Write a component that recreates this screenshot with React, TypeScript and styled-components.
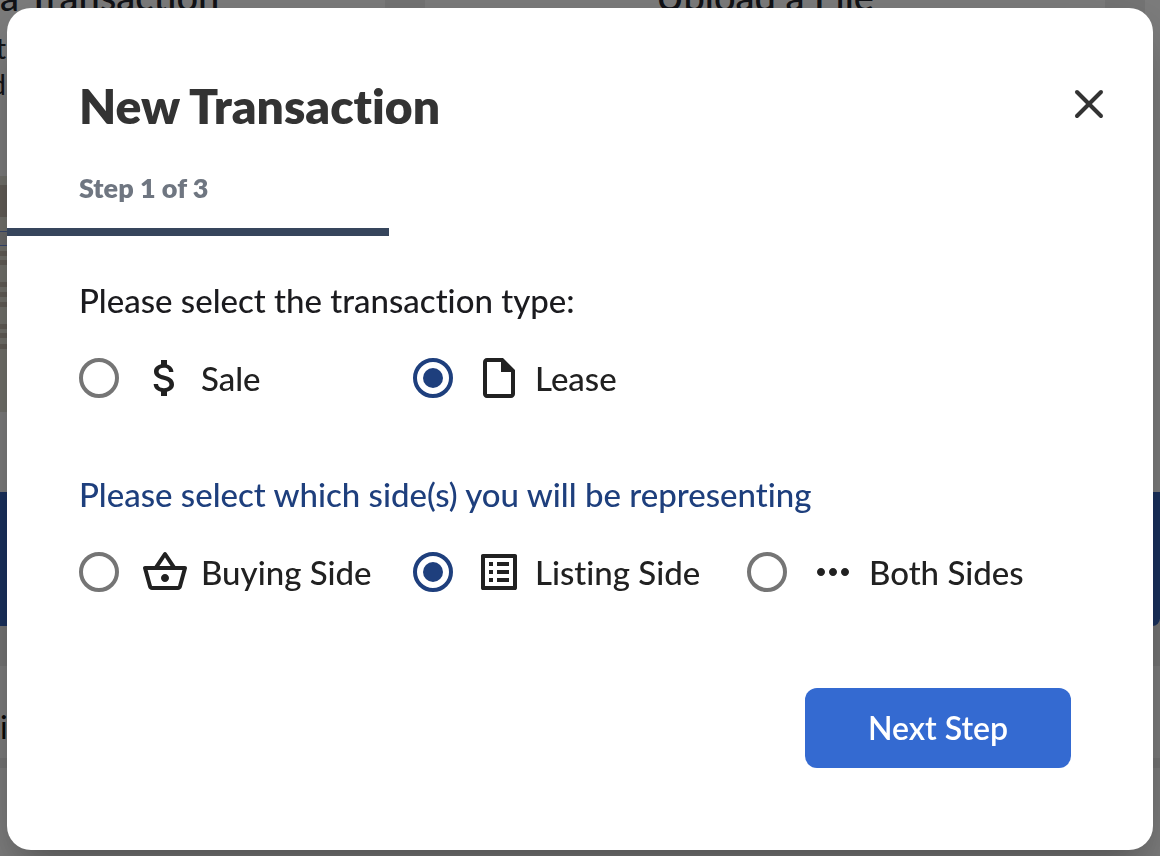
import React, { useState } from "react";
import styled, { createGlobalStyle } from "styled-components";
import type { IconType } from "react-icons";
import {
  MdAttachMoney,
  MdMoreHoriz,
  MdOutlineInsertDriveFile,
  MdOutlineListAlt,
  MdOutlineShoppingBasket,
} from "react-icons/md";
import { X } from "lucide-react";

const GlobalStyle = createGlobalStyle`
  *, *::before, *::after { box-sizing: border-box; }
  body {
    margin: 0;
    background: #e4e4e4;
    color: #212121;
    font-family: Lato, "Liberation Sans", sans-serif;
    font-variant-ligatures: none;
  }
`;

/* Dashboard behind the dialog */

const Dashboard = styled.main`
  height: 100vh;
  overflow: hidden;
  background: #fafafa;
`;

const CardRow = styled.div`
  display: grid;
  grid-template-columns: 385fr 680fr 15fr;
  column-gap: 40px;
  height: 666px;
  background: #ebebeb;
`;

const Card = styled.section`
  display: flex;
  flex-direction: column;
  height: 626px;
  overflow: hidden;
  background: #fafafa;
  border-radius: 0 0 16px 16px;

  &:first-child {
    border-bottom-left-radius: 0;
  }
`;

const CardTitle = styled.h2<{ $align: "right" | "center" }>`
  margin: -26px 0 0;
  padding-right: ${(p) => (p.$align === "right" ? "170px" : "0")};
  text-align: ${(p) => p.$align};
  white-space: nowrap;
  font-size: 38px;
  line-height: 44px;
  font-weight: 500;
  color: #22252d;
`;

const CardText = styled.p`
  width: 6px;
  height: 72px;
  margin: 12px 0 0;
  direction: rtl;
  font-size: 28px;
  line-height: 36px;
  color: #22252d;
`;

const Thumbnail = styled.div`
  height: 236px;
  margin-top: 74px;
  padding-top: 9px;
  background: #e4e3d7;
`;

const ThumbBand = styled.div`
  height: 32px;
  background: #c4bbaf;
`;

const ThumbField = styled.div`
  height: 15px;
  margin: 14px 0 5px;
  border: 1px solid #6f8fe0;
  border-width: 1px 0;
  background: #d4d4d4;
`;

const ThumbLine = styled.div<{ $gap: number }>`
  height: 5px;
  margin-top: ${(p) => p.$gap}px;
  background: #c4bbaf;
`;

const CardAction = styled.div`
  height: 134px;
  margin-top: auto;
  background: #3462bc;
`;

const ListHeading = styled.p`
  height: 102px;
  margin: 0;
  border-bottom: 10px solid #ebebeb;
  font-size: 32px;
  line-height: 122px;
  color: #111111;
`;

/* Dialog */

const Backdrop = styled.div`
  position: fixed;
  inset: 0;
  padding: 8px 7px 6px;
  overflow: auto;
  background: rgba(0, 0, 0, 0.5);
`;

const Dialog = styled.form`
  padding: 72px 0 82px;
  border-radius: 24px;
  background: #ffffff;
  box-shadow:
    0 22px 30px -14px rgba(0, 0, 0, 0.2),
    0 24px 72px 0 rgba(0, 0, 0, 0.22);
`;

const Header = styled.header`
  display: flex;
  align-items: center;
  justify-content: space-between;
  height: 52px;
  padding: 0 40px 0 72px;
`;

const Title = styled.h1`
  margin: 0;
  font-size: 48px;
  line-height: 52px;
  font-weight: 800;
  color: #333333;
`;

const CloseButton = styled.button`
  display: flex;
  width: 48px;
  height: 48px;
  margin-bottom: 4px;
  padding: 0;
  border: 0;
  background: none;
  color: #333333;
  cursor: pointer;
`;

const StepLabel = styled.p`
  margin: 40px 72px 24px;
  font-size: 27px;
  line-height: 32px;
  font-weight: 800;
  color: #6f7681;
`;

const Track = styled.div`
  height: 8px;
`;

const Progress = styled.div`
  height: 8px;
  background: #36455c;
`;

const Body = styled.div`
  display: flex;
  flex-direction: column;
  gap: 72px;
  padding: 44px 72px 0;
`;

const Group = styled.fieldset<{ $active: boolean }>`
  min-width: 0;
  margin: 0;
  padding: 0;
  border: 0;
  color: ${(p) => (p.$active ? "#1e3f7d" : "#1b1b1f")};
`;

const Question = styled.legend`
  padding: 0;
  font-size: 33px;
  line-height: 40px;
  font-weight: 500;
`;

const Options = styled.div`
  display: grid;
  grid-template-columns: repeat(3, 1fr);
  margin-top: 34px;
`;

const Option = styled.label`
  display: flex;
  align-items: center;
  height: 48px;
  font-size: 33px;
  line-height: 42px;
  font-weight: 500;
  white-space: nowrap;
  color: #212121;
  cursor: pointer;
`;

const Radio = styled.input`
  appearance: none;
  display: grid;
  place-items: center;
  flex: none;
  width: 40px;
  height: 40px;
  margin: 0 22px 0 0;
  border: 4px solid #757575;
  border-radius: 50%;

  &:checked {
    border-color: #1e3f7d;
  }

  &:checked::before {
    content: "";
    width: 20px;
    height: 20px;
    border-radius: 50%;
    background: #1e3f7d;
  }
`;

const OptionText = styled.span`
  margin-left: 12px;
`;

const Footer = styled.footer`
  display: flex;
  justify-content: flex-end;
  padding: 92px 82px 0 72px;
`;

const NextButton = styled.button`
  height: 80px;
  width: 266px;
  padding: 0;
  border: 0;
  border-radius: 12px;
  background: #346ad1;
  color: #ffffff;
  font-family: inherit;
  font-size: 32px;
  line-height: 42px;
  font-weight: 600;
  cursor: pointer;
`;

type Choice = { label: string; icon: IconType };

const types: Choice[] = [
  { label: "Sale", icon: MdAttachMoney },
  { label: "Lease", icon: MdOutlineInsertDriveFile },
];

const sides: Choice[] = [
  { label: "Buying Side", icon: MdOutlineShoppingBasket },
  { label: "Listing Side", icon: MdOutlineListAlt },
  { label: "Both Sides", icon: MdMoreHoriz },
];

type RadioGroupProps = {
  name: string;
  question: string;
  choices: Choice[];
  initial: string;
  active?: boolean;
};

function RadioGroup({ name, question, choices, initial, active = false }: RadioGroupProps) {
  const [value, setValue] = useState(initial);
  return (
    <Group $active={active}>
      <Question>{question}</Question>
      <Options>
        {choices.map(({ label, icon: Icon }) => (
          <Option key={label}>
            <Radio
              type="radio"
              name={name}
              checked={value === label}
              onChange={() => setValue(label)}
            />
            <Icon size={48} aria-hidden />
            <OptionText>{label}</OptionText>
          </Option>
        ))}
      </Options>
    </Group>
  );
}

export default function App() {
  const step = 1;
  const total = 3;
  return (
    <>
      <GlobalStyle />
      <Dashboard aria-hidden>
        <CardRow>
          <Card>
            <CardTitle $align="right">a Transaction</CardTitle>
            <CardText>
              t<br />d
            </CardText>
            <Thumbnail>
              <ThumbBand />
              <ThumbField />
              <ThumbLine $gap={5} />
              <ThumbLine $gap={4} />
              <ThumbLine $gap={17} />
              <ThumbLine $gap={5} />
              <ThumbLine $gap={5} />
              <ThumbLine $gap={17} />
              <ThumbLine $gap={4} />
              <ThumbLine $gap={6} />
            </Thumbnail>
            <CardAction />
          </Card>
          <Card>
            <CardTitle $align="center">Upload a File</CardTitle>
            <CardAction />
          </Card>
          <Card>
            <CardAction />
          </Card>
        </CardRow>
        <ListHeading>i</ListHeading>
      </Dashboard>
      <Backdrop>
        <Dialog role="dialog" aria-labelledby="dialog-title" onSubmit={(e) => e.preventDefault()}>
          <Header>
            <Title id="dialog-title">New Transaction</Title>
            <CloseButton type="button" aria-label="Close">
              <X size={48} />
            </CloseButton>
          </Header>
          <StepLabel>
            Step {step} of {total}
          </StepLabel>
          <Track role="progressbar" aria-label="Progress" aria-valuenow={step} aria-valuemax={total}>
            <Progress style={{ width: `${(step / total) * 100}%` }} />
          </Track>
          <Body>
            <RadioGroup
              name="type"
              question="Please select the transaction type:"
              choices={types}
              initial="Lease"
            />
            <RadioGroup
              name="side"
              question="Please select which side(s) you will be representing"
              choices={sides}
              initial="Listing Side"
              active
            />
          </Body>
          <Footer>
            <NextButton type="submit">Next Step</NextButton>
          </Footer>
        </Dialog>
      </Backdrop>
    </>
  );
}
